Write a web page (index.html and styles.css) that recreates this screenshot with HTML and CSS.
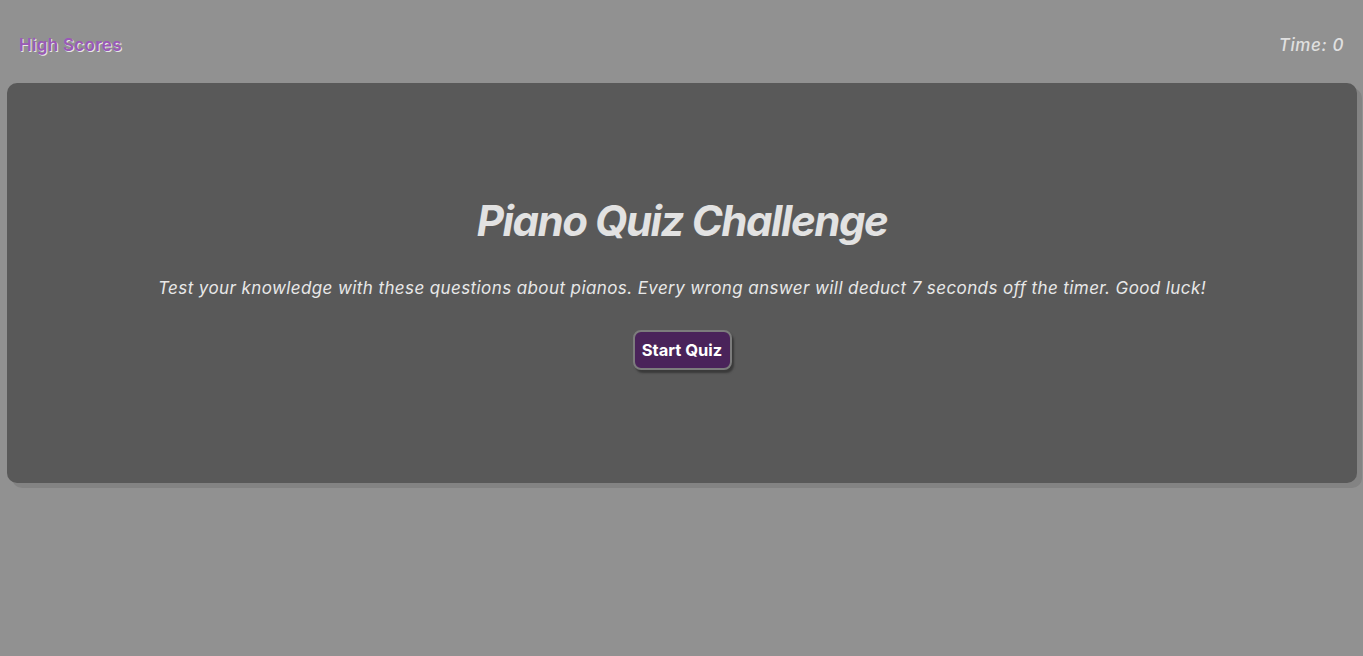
FILE: index.html
```html
<!DOCTYPE html>
<html lang="en">
<head>
<meta charset="utf-8">
<title>Piano Quiz Challenge</title>
<link rel="stylesheet" href="styles.css">
</head>
<body>
<header class="topbar">
  <a class="high-scores" href="#">High Scores</a>
  <div class="timer">Time: <span>0</span></div>
</header>
<main class="card">
  <h1 class="title">Piano Quiz Challenge</h1>
  <p class="intro">Test your knowledge with these questions about pianos. Every wrong answer will deduct 7 seconds off the timer. Good luck!</p>
  <button class="start-btn" type="button">Start Quiz</button>
</main>
</body>
</html>
```
FILE: styles.css
```css
* { box-sizing: border-box; }
html, body {
  margin: 0;
  padding: 0;
}
body {
  background: #919191;
  font-family: Inter, "Noto Sans", sans-serif;
  height: 656px;
}
.topbar {
  display: flex;
  justify-content: space-between;
  align-items: center;
  height: 83px;
  padding: 6px 19px 0 19px;
}
.high-scores {
  color: #9b59b6;
  text-decoration: none;
  font-weight: 600;
  font-size: 17px;
  letter-spacing: 0.3px;
  text-shadow: 1px 1px 0 #e6e6e6;
}
.timer {
  color: #e0e0e0;
  font-style: italic;
  font-weight: 500;
  font-size: 17px;
  letter-spacing: 0.6px;
}
.card {
  margin: 0 6px 0 7px;
  height: 400px;
  background: #595959;
  border-radius: 10px;
  box-shadow: 5px 5px 0 #838383;
  display: flex;
  flex-direction: column;
  align-items: center;
  justify-content: center;
}
.title {
  margin: 0;
  color: #e2e2e2;
  font-size: 42px;
  font-weight: 700;
  font-style: italic;
  letter-spacing: -1.45px;
  line-height: 1.2;
}
.intro {
  margin: 32px 0 32px;
  color: #e8e8e8;
  font-size: 17px;
  font-style: italic;
  letter-spacing: 0.4px;
  line-height: 1.2;
}
.start-btn {
  width: 99px;
  height: 40px;
  background: #4a235a;
  color: #ffffff;
  border: 2px solid #7c7c7c;
  border-radius: 8px;
  font-family: inherit;
  font-size: 16.5px;
  font-weight: 700;
  padding: 0;
  box-shadow: 2px 3px 2px #3a3a3a;
  cursor: pointer;
}
```
